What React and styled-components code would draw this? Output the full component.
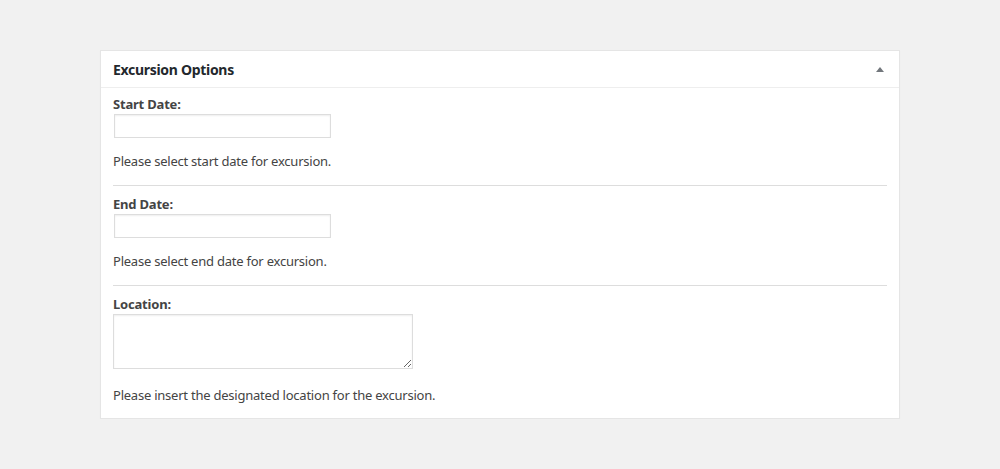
import React from 'react';
import styled, { createGlobalStyle } from 'styled-components';

const GlobalStyle = createGlobalStyle`
  body {
    margin: 0;
    background: #f1f1f1;
    font-family: "Noto Sans", "Open Sans", sans-serif;
    color: #444;
  }
`;

const fields = [
  { id: 'start', label: 'Start Date:', help: 'Please select start date for excursion.' },
  { id: 'end', label: 'End Date:', help: 'Please select end date for excursion.' },
  { id: 'location', label: 'Location:', help: 'Please insert the designated location for the excursion.', multiline: true },
];

const App = () => (
  <>
    <GlobalStyle />
    <Page>
      <Postbox>
        <Header>
          <Title>Excursion Options</Title>
          <Toggle aria-label="Toggle panel" />
        </Header>
        <Body>
          {fields.map((f) => (
            <Field key={f.id}>
              <Label htmlFor={f.id}>{f.label}</Label>
              {f.multiline ? <TextArea id={f.id} /> : <TextInput id={f.id} type="text" />}
              <Help>{f.help}</Help>
            </Field>
          ))}
        </Body>
      </Postbox>
    </Page>
  </>
);

const Page = styled.div`
  padding: 50px 100px 0;
`;

const Postbox = styled.div`
  background: #fff;
  border: 1px solid #e5e5e5;
  box-shadow: 0 1px 1px rgba(0, 0, 0, 0.04);
`;

const Header = styled.div`
  display: flex;
  align-items: center;
  justify-content: space-between;
  height: 36px;
  padding: 0 15px 0 12px;
  border-bottom: 1px solid #eee;
`;

const Title = styled.h2`
  margin: 0;
  font-size: 14px;
  font-weight: 700;
  letter-spacing: -0.3px;
  color: #23282d;
`;

const Toggle = styled.span`
  width: 0;
  height: 0;
  border-left: 4px solid transparent;
  border-right: 4px solid transparent;
  border-bottom: 5px solid #72777c;
`;

const Body = styled.div`
  padding: 0 12px 14px;
`;

const Field = styled.div`
  display: flex;
  flex-direction: column;
  align-items: flex-start;
  padding: 9px 0 15px;
  border-bottom: 1px solid #ddd;

  &:first-child {
    padding-top: 7px;
  }
  &:last-child {
    border-bottom: none;
    padding-bottom: 0;
  }
`;

const Label = styled.label`
  font-size: 13px;
  font-weight: 700;
  line-height: 18px;
  letter-spacing: -0.2px;
  color: #444;
`;

const inputBase = `
  box-sizing: border-box;
  border: 1px solid #ddd;
  box-shadow: inset 0 1px 2px rgba(0, 0, 0, 0.07);
  background: #fff;
  font-family: inherit;
  font-size: 13px;
  outline: none;
`;

const TextInput = styled.input`
  ${inputBase}
  width: 217px;
  height: 24px;
  margin: 1px;
`;

const TextArea = styled.textarea`
  ${inputBase}
  width: 300px;
  height: 55px;
  margin: 1px 0 4px;
  resize: vertical;
`;

const Help = styled.p`
  margin: 13px 0 0;
  font-size: 13px;
  line-height: 18px;
  letter-spacing: -0.23px;
  color: #444;
`;

export default App;
